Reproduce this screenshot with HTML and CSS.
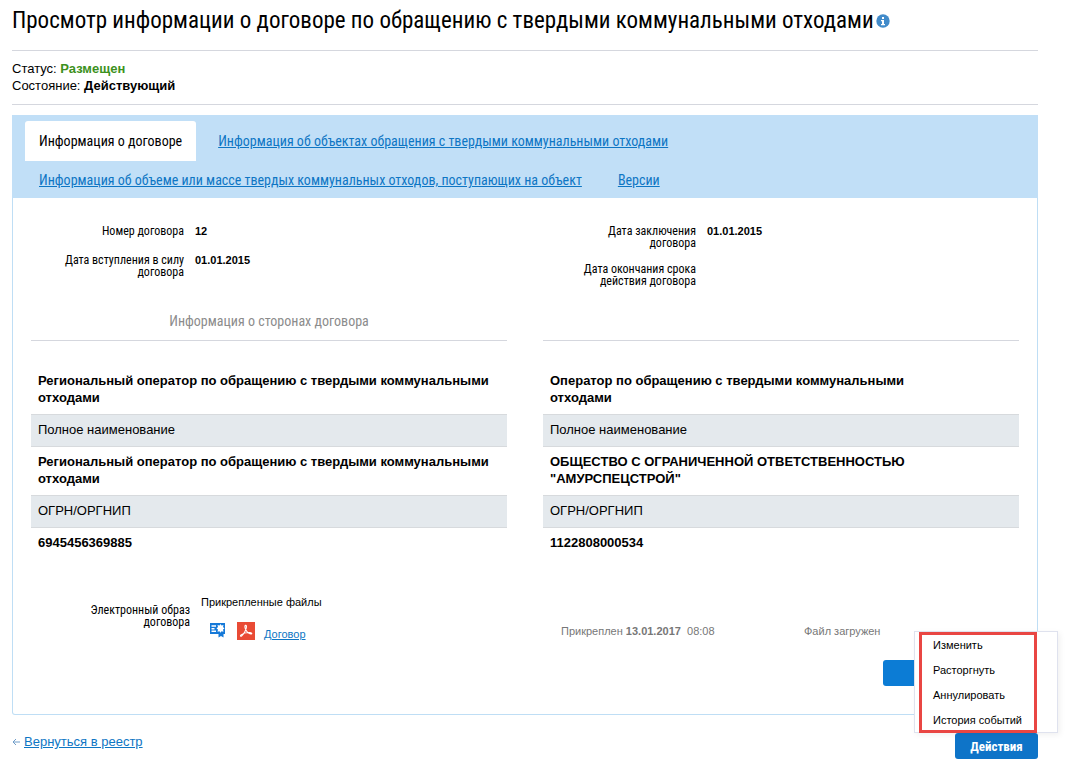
FILE: index.html
```html
<!DOCTYPE html>
<html lang="ru">
<head>
<meta charset="utf-8">
<meta name="viewport" content="width=device-width, initial-scale=1">
<title>Просмотр информации о договоре</title>
<link rel="stylesheet" href="styles.css">
</head>
<body>
<main class="page">
  <header class="page-header">
    <h1 class="title">Просмотр информации о договоре по обращению с твердыми коммунальными отходами</h1>
    <svg class="info-icon" viewBox="0 0 14 14" role="img" aria-label="Справка"><circle cx="7" cy="7" r="6.7" fill="#428bca"/><path d="M6 3h2v2H6zM5 6h3v4h1v1.2H5V10h1V7.2H5z" fill="#fff"/></svg>
  </header>

  <section class="status">
    <div>Статус: <b class="status-placed">Размещен</b></div>
    <div>Состояние: <b>Действующий</b></div>
  </section>

  <nav class="tabs">
    <a class="tab tab-active" href="#contract">Информация о договоре</a>
    <a class="tab" href="#objects">Информация об объектах обращения с твердыми коммунальными отходами</a>
    <a class="tab" href="#volume">Информация об объеме или массе твердых коммунальных отходов, поступающих на объект</a>
    <a class="tab" href="#versions">Версии</a>
  </nav>

  <section class="panel" id="contract">
    <div class="columns summary">
      <dl class="fields">
        <div class="field"><dt>Номер договора</dt><dd>12</dd></div>
        <div class="field"><dt>Дата вступления в силу договора</dt><dd>01.01.2015</dd></div>
      </dl>
      <dl class="fields">
        <div class="field"><dt>Дата заключения договора</dt><dd>01.01.2015</dd></div>
        <div class="field"><dt>Дата окончания срока действия договора</dt><dd></dd></div>
      </dl>
    </div>

    <div class="columns parties">
      <section class="party">
        <h2 class="legend">Информация о сторонах договора</h2>
        <h3 class="party-title">Региональный оператор по обращению с твердыми коммунальными отходами</h3>
        <dl class="details">
          <dt>Полное наименование</dt>
          <dd>Региональный оператор по обращению с твердыми коммунальными отходами</dd>
          <dt>ОГРН/ОРГНИП</dt>
          <dd>6945456369885</dd>
        </dl>
      </section>
      <section class="party">
        <div class="legend"></div>
        <h3 class="party-title">Оператор по обращению с твердыми коммунальными отходами</h3>
        <dl class="details">
          <dt>Полное наименование</dt>
          <dd>ОБЩЕСТВО С ОГРАНИЧЕННОЙ ОТВЕТСТВЕННОСТЬЮ "АМУРСПЕЦСТРОЙ"</dd>
          <dt>ОГРН/ОРГНИП</dt>
          <dd>1122808000534</dd>
        </dl>
      </section>
    </div>

    <div class="attachments">
      <div class="attachments-label">Электронный образ договора</div>
      <div class="files">
        <div class="files-title">Прикрепленные файлы</div>
        <div class="file">
          <div class="file-name">
            <svg class="sign-icon" viewBox="0 0 16 18" aria-hidden="true"><path d="M0 1h15v11H0z" fill="#1579d8"/><path d="M1.500 3.200H6v1.500H1.500zM1.500 5.900H4.500v1.500H1.500zM1.500 8.600H6v1.500H1.500z" fill="#fff"/><path d="M8.500 10h5v5.500L11 14l-2.500 1.500z" fill="#1579d8"/><path d="m10.500 2 1 1.500 2-.5-.500 2L14.500 6.500 13 7.500l.5 2.200-2-.5-1 1.600-1-1.600-2 .5.500-2.200-1.500-1L8 5l-.5-2 2 .5z" fill="#fff"/></svg>
            <svg class="pdf-icon" viewBox="0 0 18 18" aria-hidden="true"><path d="M0 0h18v18H0z" fill="#e94b35"/><path d="M8.500 3.400c1-.2 1.200 1.200.7 3C8.500 9 6.500 12.500 4.800 13.900c-1 .8-1.800.1-1-.7 1.500-1.500 6-2.800 9.200-2.600 2.200.2 2.300 1.500.8 1.400-2-.1-4.600-2.600-5.500-5.300-.5-1.500-.6-3.100.2-3.300z" fill="none" stroke="#fff" stroke-width="1.100"/></svg>
            <a href="#file">Договор</a>
          </div>
          <div class="file-date">Прикреплен <b>13.01.2017</b>&nbsp; 08:08</div>
          <div class="file-state">Файл загружен</div>
        </div>
      </div>
    </div>

    <div class="panel-actions"><button class="button panel-button" type="button" aria-label="Закрыть"></button></div>
  </section>

  <footer class="footer">
    <div class="back"><svg class="arrow" viewBox="0 0 8 8" aria-hidden="true"><path d="M8 4H1M4 1 1 4l3 3" fill="none" stroke="#6f9cc8"/></svg><a href="#registry">Вернуться в реестр</a></div>
    <div class="actions">
      <button class="button actions-button" type="button">Действия</button>
      <div class="menu">
        <button class="menu-item" type="button">Изменить</button>
        <button class="menu-item" type="button">Расторгнуть</button>
        <button class="menu-item" type="button">Аннулировать</button>
        <button class="menu-item" type="button">История событий</button>
      </div>
    </div>
  </footer>
</main>
</body>
</html>
```

FILE: styles.css
```css
* { box-sizing: border-box; }
body {
  margin: 0;
  background: #fff;
  color: #000;
  font: 13px/17px "Liberation Sans", Arial, sans-serif;
}
h1, h2, h3, dl, dt, dd { margin: 0; font-weight: normal; }
a { color: #0e76c4; }
.page { padding: 4px 28px 0 12px; }

.title, .tabs, .fields dt, .legend, .attachments-label, .actions-button {
  font-family: "Roboto Condensed", "Liberation Sans Narrow", "Liberation Sans", sans-serif;
}
.page-header { display: flex; align-items: center; gap: 2px; height: 46px; padding-bottom: 13px; }
.title { font-size: 23px; line-height: 32px; white-space: nowrap; }
.info-icon { width: 14px; height: 14px; flex: none; }

.status {
  padding: 9px 0 10px;
  margin-bottom: 10px;
  border: solid #d5d7de;
  border-width: 1px 0;
}
.status-placed { color: #3c9120; }

.tabs {
  display: flex;
  flex-wrap: wrap;
  gap: 1px 8px;
  padding: 6px 13px 0;
  background: #c1dff7;
  font-size: 14px;
  line-height: 20px;
}
.tab { padding: 10px 14px 8px; }
.tab-active {
  margin-bottom: -2px;
  padding-bottom: 10px;
  background: #fff;
  border-radius: 3px 3px 0 0;
  color: #000;
  text-decoration: none;
}

.panel { border: 1px solid #bfdef5; border-top: 0; border-radius: 0 0 3px 3px; padding: 27px 18px 28px; }
.columns { display: grid; grid-template-columns: 1fr 1fr; gap: 36px; }
.fields { display: flex; flex-direction: column; gap: 14px; }
.field { display: grid; grid-template-columns: 153px 1fr; gap: 11px; min-height: 15px; }
.fields dt { padding-left: 28px; font-size: 12px; line-height: 12px; text-align: right; }
.fields dd { font-size: 11px; line-height: 13px; font-weight: bold; }
.summary { min-height: 86px; }

.legend {
  height: 30px;
  margin-bottom: 25px;
  border-bottom: 1px solid #d5d7de;
  color: #8c8c8c;
  font-size: 14px;
  line-height: 20px;
  text-align: center;
}
.party-title, .details dt, .details dd { font-size: 13px; line-height: 17px; padding: 6px 64px 8px 7px; }
.party-title, .details dd { font-weight: bold; }
.party:first-child .party-title, .party:first-child dd { padding-right: 16px; }
.details dt { background: #e4e9ed; border: solid #d7dadd; border-width: 1px 0; }

.attachments { display: grid; grid-template-columns: 159px 1fr; gap: 11px; margin-top: 36px; }
.attachments-label { padding: 9px 0 0 48px; font-size: 12px; line-height: 12px; text-align: right; }
.files { font-size: 11px; line-height: 14px; }
.file { display: grid; grid-template-columns: 360px 243px 1fr; margin-top: 12px; color: #777; }
.file-name { display: flex; align-items: center; height: 20px; padding-left: 9px; }
.file-name a { margin: 6px 0 0 9px; }
.file-date, .file-state { padding-top: 3px; }
.sign-icon { width: 16px; height: 18px; margin-right: 11px; }
.pdf-icon { width: 18px; height: 18px; }
.panel-actions { display: flex; justify-content: flex-end; margin-top: 19px; }
.button { height: 26px; border: 0; border-radius: 3px; background: #0c7cd5; color: #fff; }
.panel-button { width: 136px; }

.footer { display: flex; justify-content: space-between; align-items: flex-start; padding-top: 18px; }
.back { display: flex; align-items: center; gap: 4px; }
.arrow { width: 8px; height: 8px; }
.actions { position: relative; }
.actions-button { width: 83px; background: #0e74c8; font-size: 13px; font-weight: bold; }
.menu {
  position: absolute;
  right: -20px;
  bottom: 100%;
  width: 144px;
  display: flex;
  flex-direction: column;
  background: #fff;
  border: 1px solid #dfe2ee;
  box-shadow: 2px 2px 6px rgba(0, 0, 0, .06);
}
.menu::after {
  content: "";
  position: absolute;
  inset: 0 20px -1px 4px;
  border: 3px solid #e94643;
  pointer-events: none;
}
.menu-item {
  height: 25px;
  border: 0;
  padding: 0 0 0 18px;
  background: none;
  color: #000;
  font: 11px/14px "Liberation Sans", Arial, sans-serif;
  text-align: left;
}
```
